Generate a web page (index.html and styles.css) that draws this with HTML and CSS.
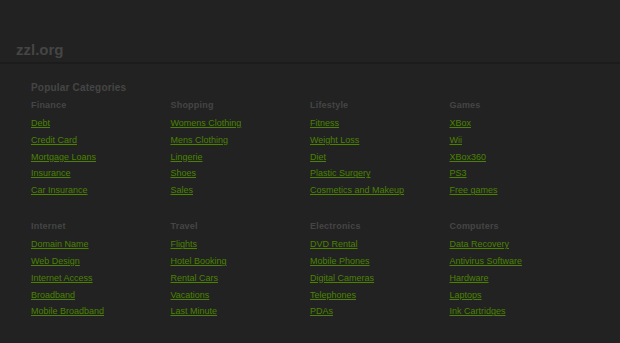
FILE: index.html
```html
<!DOCTYPE html>
<html lang="en">
<head>
    <meta charset="UTF-8">
    <meta name="viewport" content="width=device-width, initial-scale=1.0">
    <title>zzl.org</title>
    <link rel="stylesheet" href="styles.css">
</head>
<body>
    <div class="header">
        <div class="logo">zzl.org</div>
    </div>
    <div class="content">
        <h2>Popular Categories</h2>
        <div class="grid">
            <div class="category">
                <h3>Finance</h3>
                <ul>
                    <li><a href="#">Debt</a></li>
                    <li><a href="#">Credit Card</a></li>
                    <li><a href="#">Mortgage Loans</a></li>
                    <li><a href="#">Insurance</a></li>
                    <li><a href="#">Car Insurance</a></li>
                </ul>
            </div>
            <div class="category">
                <h3>Shopping</h3>
                <ul>
                    <li><a href="#">Womens Clothing</a></li>
                    <li><a href="#">Mens Clothing</a></li>
                    <li><a href="#">Lingerie</a></li>
                    <li><a href="#">Shoes</a></li>
                    <li><a href="#">Sales</a></li>
                </ul>
            </div>
            <div class="category">
                <h3>Lifestyle</h3>
                <ul>
                    <li><a href="#">Fitness</a></li>
                    <li><a href="#">Weight Loss</a></li>
                    <li><a href="#">Diet</a></li>
                    <li><a href="#">Plastic Surgery</a></li>
                    <li><a href="#">Cosmetics and Makeup</a></li>
                </ul>
            </div>
            <div class="category">
                <h3>Games</h3>
                <ul>
                    <li><a href="#">XBox</a></li>
                    <li><a href="#">Wii</a></li>
                    <li><a href="#">XBox360</a></li>
                    <li><a href="#">PS3</a></li>
                    <li><a href="#">Free games</a></li>
                </ul>
            </div>
            <div class="category">
                <h3>Internet</h3>
                <ul>
                    <li><a href="#">Domain Name</a></li>
                    <li><a href="#">Web Design</a></li>
                    <li><a href="#">Internet Access</a></li>
                    <li><a href="#">Broadband</a></li>
                    <li><a href="#">Mobile Broadband</a></li>
                </ul>
            </div>
            <div class="category">
                <h3>Travel</h3>
                <ul>
                    <li><a href="#">Flights</a></li>
                    <li><a href="#">Hotel Booking</a></li>
                    <li><a href="#">Rental Cars</a></li>
                    <li><a href="#">Vacations</a></li>
                    <li><a href="#">Last Minute</a></li>
                </ul>
            </div>
            <div class="category">
                <h3>Electronics</h3>
                <ul>
                    <li><a href="#">DVD Rental</a></li>
                    <li><a href="#">Mobile Phones</a></li>
                    <li><a href="#">Digital Cameras</a></li>
                    <li><a href="#">Telephones</a></li>
                    <li><a href="#">PDAs</a></li>
                </ul>
            </div>
            <div class="category">
                <h3>Computers</h3>
                <ul>
                    <li><a href="#">Data Recovery</a></li>
                    <li><a href="#">Antivirus Software</a></li>
                    <li><a href="#">Hardware</a></li>
                    <li><a href="#">Laptops</a></li>
                    <li><a href="#">Ink Cartridges</a></li>
                </ul>
            </div>
        </div>
    </div>
</body>
</html>
```

FILE: styles.css
```css
body {
    margin: 0;
    background-color: #222;
    font-family: "Liberation Sans", Arial, sans-serif;
    color: #555;
}
.header {
    height: 64px;
    border-bottom: 2px solid #1c1c1c;
    box-sizing: border-box;
    padding: 40px 0 0 16px;
}
.logo {
    font-size: 15px;
    font-weight: bold;
    line-height: 20px;
    color: #454545;
}
.content {
    padding: 17px 0 0 31px;
}
h2 {
    margin: 0 0 4px;
    font-size: 10px;
    line-height: 14px;
    letter-spacing: 0.2px;
    color: #454545;
}
.grid {
    display: grid;
    grid-template-columns: repeat(4, 139.5px);
    row-gap: 21.5px;
}
h3 {
    margin: 0 0 4px;
    font-size: 9px;
    line-height: 12px;
    letter-spacing: 0.2px;
    color: #454545;
}
ul {
    list-style: none;
    margin: 0;
    padding: 0;
}
li {
    font-size: 9px;
    line-height: 16.75px;
}
a {
    color: #4a8200;
}
```
